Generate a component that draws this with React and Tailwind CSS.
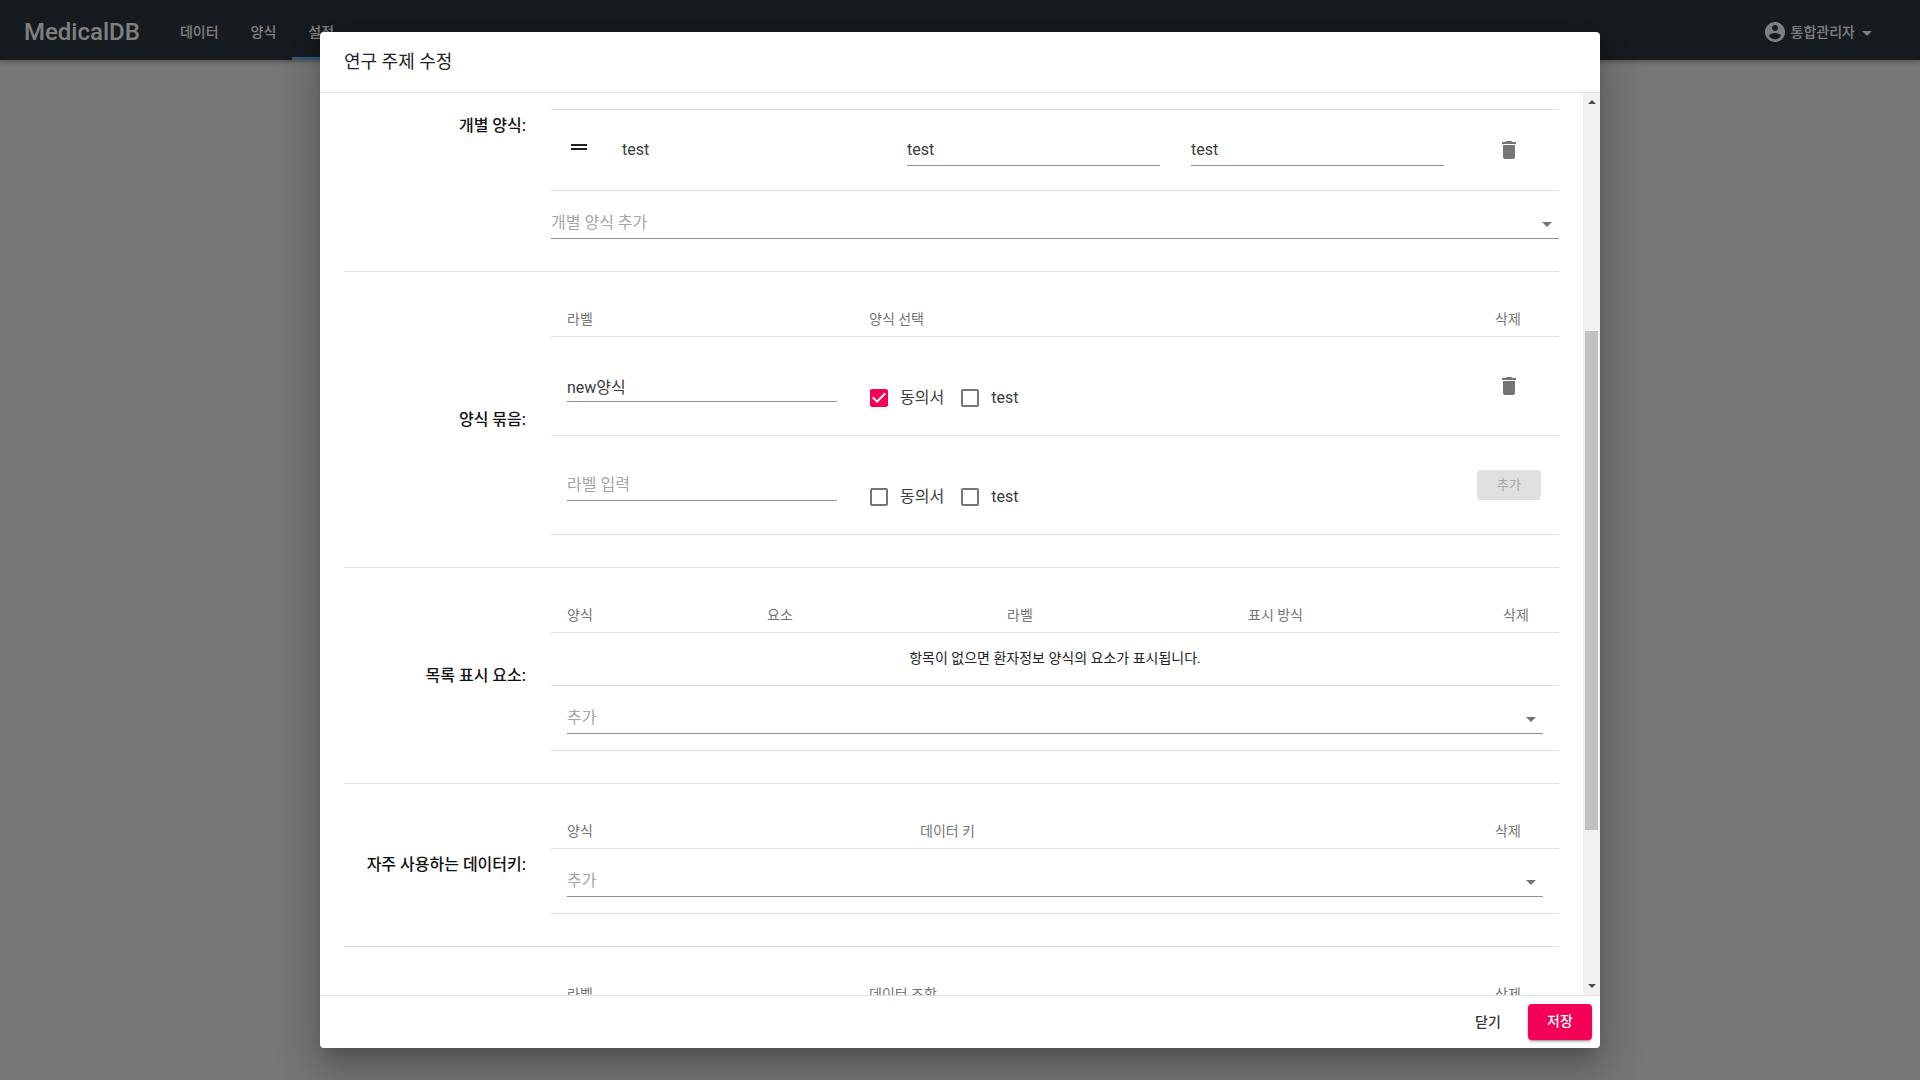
import React from "react";

const DRAG = "M20 9H4v2h16V9zM4 15h16v-2H4v2z";
const TRASH = "M6 19c0 1.1.9 2 2 2h8c1.1 0 2-.9 2-2V7H6v12zM19 4h-3.5l-1-1h-5l-1 1H5v2h14V4z";
const ARROW = "M7 10l5 5 5-5z";
const ACCOUNT = "M12 2C6.48 2 2 6.48 2 12s4.48 10 10 10 10-4.48 10-10S17.52 2 12 2zm0 3c1.66 0 3 1.34 3 3s-1.34 3-3 3-3-1.34-3-3 1.34-3 3-3zm0 14.2c-2.5 0-4.71-1.28-6-3.22.03-1.99 4-3.08 6-3.08 1.99 0 5.97 1.09 6 3.08-1.29 1.94-3.5 3.22-6 3.22z";
const BOX = "M19 5v14H5V5h14m0-2H5c-1.1 0-2 .9-2 2v14c0 1.1.9 2 2 2h14c1.1 0 2-.89 2-2V5c0-1.11-.9-2-2-2z";
const BOX_ON = "M19 3H5c-1.11 0-2 .9-2 2v14c0 1.1.89 2 2 2h14c1.11 0 2-.9 2-2V5c0-1.1-.89-2-2-2zm-9 14l-5-5 1.41-1.41L10 14.17l7.59-7.59L19 8l-9 9z";

function Icon({ d, className }) {
  return (
    <svg viewBox="0 0 24 24" className={className} fill="currentColor">
      <path d={d} />
    </svg>
  );
}

function Check({ label, on }) {
  return (
    <div className="flex items-center h-6">
      <Icon d={on ? BOX_ON : BOX} className={on ? "w-6 h-6 shrink-0 text-[#f50057]" : "w-6 h-6 shrink-0 text-[#757575]"} />
      <span className="ml-[9px] text-[16px] leading-6 text-[#3c3c3c]">{label}</span>
    </div>
  );
}

function Checks({ on }) {
  return (
    <div className="flex gap-[14px] ml-[30px] mt-[49px]">
      <Check label="동의서" on={on} />
      <Check label="test" />
    </div>
  );
}

function SelectBox({ label }) {
  return (
    <div className="flex items-center h-[48px] pt-[17px] border-b border-[#8f8f8f]">
      <span className="flex-1 text-[16px] text-[#a6a6a6]">{label}</span>
      <Icon d={ARROW} className="w-6 h-6 mt-[1px] text-[#757575]" />
    </div>
  );
}

function THead({ cols }) {
  return (
    <div className="flex items-center h-[40px] pt-[6px] border-b border-[#e0e0e0] text-[14px] text-[#757575]">
      {cols.map(([t, w], i) => (
        <div key={i} className={i === 0 ? "shrink-0 pl-4" : "shrink-0"} style={{ width: w }}>{t}</div>
      ))}
    </div>
  );
}

function Section({ label, children, top }) {
  return (
    <div className={top ? "flex items-start h-[163px] border-b border-[#e0e0e0]" : "flex items-center pt-[25px] pb-[32px] border-b border-[#e0e0e0]"}>
      <div className={top ? "w-[182px] mt-[5px] mr-[25px] text-right text-[16px] leading-6 font-medium text-[#111111] shrink-0" : "w-[182px] mt-[7px] mr-[25px] text-right text-[16px] leading-6 font-medium text-[#111111] shrink-0"}>
        {label}
      </div>
      <div className="w-[1008px] shrink-0">{children}</div>
    </div>
  );
}

function LineInput({ value, placeholder, className }) {
  return (
    <div className={"h-8 flex items-center border-b border-[#8f8f8f] text-[16px] shrink-0 " + (placeholder ? "text-[#a6a6a6] " : "text-[#3c3c3c] ") + className}>
      {value || placeholder}
    </div>
  );
}

export default function App() {
  return (
    <div className="relative h-screen w-full overflow-hidden bg-[#eeeeee] font-['Roboto','Noto_Sans_CJK_KR',sans-serif]">
      <header className="flex items-center h-[60px] pt-[4px] bg-[#2b363f] text-white shadow-[0_2px_4px_rgba(0,0,0,0.3)]">
        <div className="ml-6 text-[24px] font-medium">MedicalDB</div>
        <nav className="flex ml-6 h-full text-[14px] font-medium">
          <div className="flex items-center px-4">데이터</div>
          <div className="flex items-center px-4">양식</div>
          <div className="flex items-center px-4 border-b-[3px] border-[#6fb1ee] pt-[3px]">설정</div>
        </nav>
        <div className="flex items-center ml-auto mr-[48px] text-[14px] font-medium">
          <Icon d={ACCOUNT} className="w-6 h-6" />
          <span className="ml-[4px]">통합관리자</span>
          <Icon d={ARROW} className="w-6 h-6 -mr-[7px] mt-[1px]" />
        </div>
      </header>

      <div className="absolute inset-0 bg-black/50" />

      <div className="absolute left-[320px] top-[32px] w-[1280px] h-[1016px] flex flex-col bg-white rounded shadow-[0_11px_15px_-7px_rgba(0,0,0,0.2),0_24px_38px_3px_rgba(0,0,0,0.14),0_9px_46px_8px_rgba(0,0,0,0.12)]">
        <div className="flex items-center h-[61px] pl-6 pb-[2px] border-b border-[#e0e0e0] text-[18px] text-[#222222] shrink-0">
          연구 주제 수정
        </div>

        <div className="flex flex-1 min-h-0">
          <div className="flex-1 overflow-hidden pt-4 pl-6 pr-6">
            <Section label="개별 양식:" top>
              <div className="flex items-start h-[82px] border-y border-[#e0e0e0] pl-4 text-[16px] text-[#3c3c3c]">
                <Icon d={DRAG} className="w-6 h-6 mt-[25px] shrink-0 text-[#222222]" />
                <div className="w-[285px] h-8 mt-[24px] ml-[31px] flex items-center shrink-0">test</div>
                <LineInput value="test" className="w-[253px] mt-[24px]" />
                <LineInput value="test" className="w-[253px] mt-[24px] ml-[31px]" />
                <Icon d={TRASH} className="w-6 h-6 mt-[28px] ml-[53px] shrink-0 text-[#757575]" />
              </div>
              <SelectBox label="개별 양식 추가" />
            </Section>

            <Section label="양식 묶음:">
              <THead cols={[["라벨", 318], ["양식 선택", 626], ["삭제", 64]]} />
              <div className="flex items-start h-[99px] border-b border-[#e0e0e0] pl-4">
                <LineInput value="new양식" className="w-[270px] mt-[33px] pt-[5px]" />
                <Checks on />
                <Icon d={TRASH} className="w-6 h-6 mt-[37px] ml-auto mr-[38px] shrink-0 text-[#757575]" />
              </div>
              <div className="flex items-start h-[99px] border-b border-[#e0e0e0] pl-4">
                <LineInput placeholder="라벨 입력" className="w-[270px] mt-[33px] pt-[1px]" />
                <Checks />
                <div className="flex items-center justify-center w-16 h-[30px] mt-[34px] ml-auto mr-[18px] rounded bg-[#e0e0e0] text-[13px] text-[#a6a6a6] shrink-0">추가</div>
              </div>
            </Section>

            <Section label="목록 표시 요소:">
              <THead cols={[["양식", 216], ["요소", 240], ["라벨", 241], ["표시 방식", 255], ["삭제", 56]]} />
              <div className="flex items-center justify-center h-[53px] pb-[2px] border-b border-[#e0e0e0] text-[14px] text-[#222222]">
                항목이 없으면 환자정보 양식의 요소가 표시됩니다.
              </div>
              <div className="h-[65px] px-4 border-b border-[#e0e0e0]">
                <SelectBox label="추가" />
              </div>
            </Section>

            <Section label="자주 사용하는 데이터키:">
              <THead cols={[["양식", 369], ["데이터 키", 575], ["삭제", 64]]} />
              <div className="h-[65px] px-4 border-b border-[#e0e0e0]">
                <SelectBox label="추가" />
              </div>
            </Section>

            <Section label="">
              <THead cols={[["라벨", 318], ["데이터 조합", 626], ["삭제", 64]]} />
            </Section>
          </div>

          <div className="flex flex-col items-center w-[17px] shrink-0 bg-[#f1f1f1]">
            <svg viewBox="0 0 8 5" className="w-2 h-[4px] mt-[7px] text-[#505050]" fill="currentColor" preserveAspectRatio="none"><path d="M4 0l4 5H0z" /></svg>
            <div className="w-[13px] h-[499px] mt-[227px] bg-[#c1c1c1]" />
            <svg viewBox="0 0 8 5" className="w-2 h-[4px] mt-auto mb-[7px] text-[#505050]" fill="currentColor" preserveAspectRatio="none"><path d="M0 0h8L4 5z" /></svg>
          </div>
        </div>

        <div className="flex items-center justify-end h-[53px] pr-2 border-t border-[#e0e0e0] shrink-0">
          <div className="flex items-center justify-center w-16 h-9 text-[14px] font-medium text-[#333333]">닫기</div>
          <div className="flex items-center justify-center w-16 h-9 ml-2 pb-[2px] rounded bg-[#f50057] text-[14px] font-medium text-white shadow-[0_3px_1px_-2px_rgba(0,0,0,0.2),0_2px_2px_0_rgba(0,0,0,0.14),0_1px_5px_0_rgba(0,0,0,0.12)]">저장</div>
        </div>
      </div>
    </div>
  );
}
